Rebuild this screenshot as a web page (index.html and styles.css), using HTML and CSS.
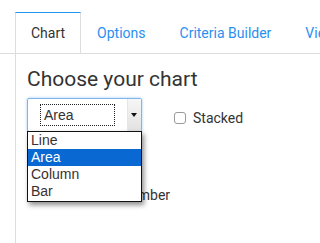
FILE: index.html
```html
<!DOCTYPE html>
<html lang="en">
<head>
    <meta charset="UTF-8">
    <meta name="viewport" content="width=device-width, initial-scale=1.0">
    <title>Chart settings</title>
    <link rel="stylesheet" href="styles.css">
</head>
<body>
    <div id="tabs">
        <div class="tab active">Chart</div>
        <div class="tab">Options</div>
        <div class="tab">Criteria Builder</div>
        <div class="tab">View</div>
    </div>
    <div id="panel">
        <h1>Choose your chart</h1>
        <div class="row">
            <div class="picker">
                <div class="select">
                    <span class="value">Area</span>
                    <span class="arrow"></span>
                </div>
                <ul class="menu">
                    <li>Line</li>
                    <li class="selected">Area</li>
                    <li>Column</li>
                    <li>Bar</li>
                </ul>
            </div>
            <label class="check stacked"><span class="box"></span>Stacked</label>
        </div>
        <div class="row second">
            <label class="check">Show as number</label>
        </div>
    </div>
</body>
</html>
```

FILE: styles.css
```css
*{
    margin: 0;
    padding: 0;
    box-sizing: border-box;
}
body{
    font-family: Roboto, "Liberation Sans", sans-serif;
    color: #333;
    background: #fff;
    width: 320px;
    height: 243px;
    overflow: hidden;
}
#tabs{
    display: flex;
    padding: 12px 0 0 15px;
    font-size: 14px;
    white-space: nowrap;
    border-bottom: 1px solid #ddd;
    height: 54px;
    overflow: hidden;
}
.tab{
    height: 42px;
    line-height: 40px;
    padding: 0 15px;
    border: 1px solid transparent;
    color: #2b8ff0;
    margin-right: 2px;
    flex-shrink: 0;
}
.tab.active{
    color: #333;
    border: 1px solid #ddd;
    border-top: 1px solid #2196f3;
    border-bottom: 1px solid #fff;
    margin-right: 0;
}
#panel{
    margin-left: 15px;
    border-left: 1px solid #ddd;
    height: 189px;
    padding: 12px 0 0 11px;
}
h1{
    font-weight: 400;
    font-size: 21px;
    line-height: 26px;
}
.row{
    display: flex;
    align-items: center;
    margin-top: 6px;
}
.picker{
    position: relative;
    width: 115px;
}
.select{
    height: 34px;
    display: flex;
    align-items: center;
    border: 1px solid #7fb6ee;
    box-shadow: 0 0 3px #9ccaf7;
    border-radius: 2px;
    background: #fff;
    font-family: "Liberation Sans", Arial, sans-serif;
    font-size: 14px;
}
.value{
    margin-left: 12px;
    width: 75px;
    height: 22px;
    line-height: 20px;
    padding-left: 3px;
    border: 1px dotted #222;
}
.arrow{
    margin-left: auto;
    width: 14px;
    height: 100%;
    background: linear-gradient(#f6f6f6, #e2e2e2);
    border-left: 1px solid #e6e6e6;
    position: relative;
}
.arrow::after{
    content: "";
    position: absolute;
    left: 3px;
    top: 14px;
    border-left: 3px solid transparent;
    border-right: 3px solid transparent;
    border-top: 4px solid #111;
}
.menu{
    position: absolute;
    left: 0;
    top: 33px;
    width: 115px;
    list-style: none;
    background: #fff;
    border: 1px solid #111;
    box-shadow: 2px 3px 5px rgba(0, 0, 0, 0.45);
    font-family: "Liberation Sans", Arial, sans-serif;
    font-size: 14px;
    z-index: 2;
    padding-bottom: 1px;
}
.menu li{
    height: 17px;
    line-height: 17px;
    padding-left: 3px;
    color: #3a3030;
}
.menu li.selected{
    background: #0a68d3;
    color: #fff;
}
.check{
    display: flex;
    align-items: center;
    font-size: 14px;
    margin-left: 32px;
}
.stacked{
    margin-top: 6px;
}
.box{
    width: 12px;
    height: 12px;
    border: 1px solid #9a9a9a;
    border-radius: 3px;
    margin-right: 7px;
}
.second{
    margin-top: 55px;
}
.second .check{
    margin-left: 39px;
}
```
